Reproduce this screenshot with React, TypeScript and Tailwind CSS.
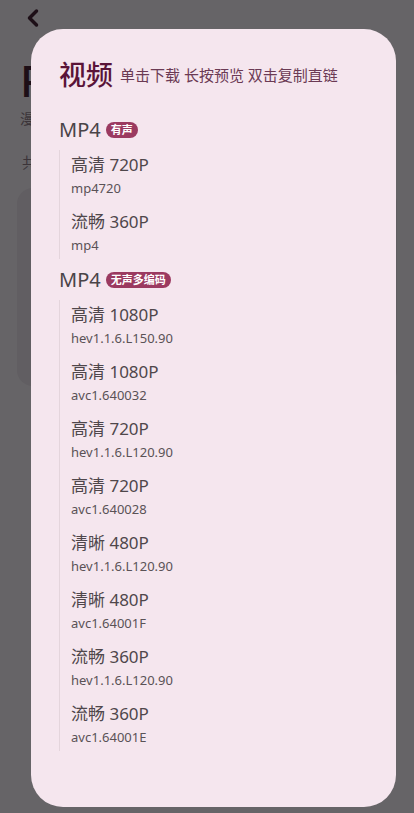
import { ChevronLeft } from 'lucide-react'

type Item = { name: string; codec: string }

const soundGroup: Item[] = [
  { name: '高清 720P', codec: 'mp4720' },
  { name: '流畅 360P', codec: 'mp4' },
]

const silentGroup: Item[] = [
  { name: '高清 1080P', codec: 'hev1.1.6.L150.90' },
  { name: '高清 1080P', codec: 'avc1.640032' },
  { name: '高清 720P', codec: 'hev1.1.6.L120.90' },
  { name: '高清 720P', codec: 'avc1.640028' },
  { name: '清晰 480P', codec: 'hev1.1.6.L120.90' },
  { name: '清晰 480P', codec: 'avc1.64001F' },
  { name: '流畅 360P', codec: 'hev1.1.6.L120.90' },
  { name: '流畅 360P', codec: 'avc1.64001E' },
]

const font = { fontFamily: '"Noto Sans", "Noto Sans CJK SC", sans-serif' }

function Group({ label, badge, items }: { label: string; badge: string; items: Item[] }) {
  return (
    <div>
      <div className="flex h-7 items-center">
        <span className="text-[20px] leading-7 text-[#4a4448]">{label}</span>
        <span className="ml-[5px] rounded-full bg-[#9b3a60] px-[5px] text-[11px] font-bold leading-4 text-white">
          {badge}
        </span>
      </div>
      <div className="mt-[6px] flex flex-col gap-[13px] border-l border-[#e4d5dc] pb-[5px] pl-[11px] pt-[3px]">
        {items.map((item, i) => (
          <div key={i} className="flex flex-col">
            <span className="text-[17px] leading-6 text-[#4f474b]">{item.name}</span>
            <span className="mt-0.5 text-[13px] leading-[18px] text-[#5a5256]">{item.codec}</span>
          </div>
        ))}
      </div>
    </div>
  )
}

export default function App() {
  return (
    <div className="relative h-[813px] w-full overflow-hidden bg-[#666467]" style={font}>
      {/* dimmed page behind the sheet */}
      <div className="flex flex-col px-[17px]">
        <ChevronLeft size={28} strokeWidth={3} className="ml-[2px] mt-[4px] text-[#1d0f17]" />
        <div className="mt-[22px] pl-[3px] text-[44px] font-medium leading-[52px] text-[#1d0f17]">P</div>
        <div className="mt-[2px] pl-[3px] text-[14px] text-[#3b3439]">漫</div>
        <div className="mt-[22px] pl-[5px] text-[15px] text-[#3b3439]">共</div>
        <div className="mt-[14px] h-[198px] rounded-2xl bg-[#615e62]" />
      </div>

      {/* sheet */}
      <div className="absolute left-[31px] top-[29px] h-[778px] w-[365px] rounded-[32px] bg-[#f5e6ee] pl-[28px] pr-5 pt-[28px]">
        <div className="flex items-center">
          <span className="text-[27px] font-medium leading-9 text-[#5a1438]">视频</span>
          <span className="ml-[7px] pt-[1px] text-[15px] text-[#6b3a54]">单击下载 长按预览 双击复制直链</span>
        </div>
        <div className="mt-[23px] flex flex-col gap-[7px]">
          <Group label="MP4" badge="有声" items={soundGroup} />
          <Group label="MP4" badge="无声多编码" items={silentGroup} />
        </div>
      </div>
    </div>
  )
}
